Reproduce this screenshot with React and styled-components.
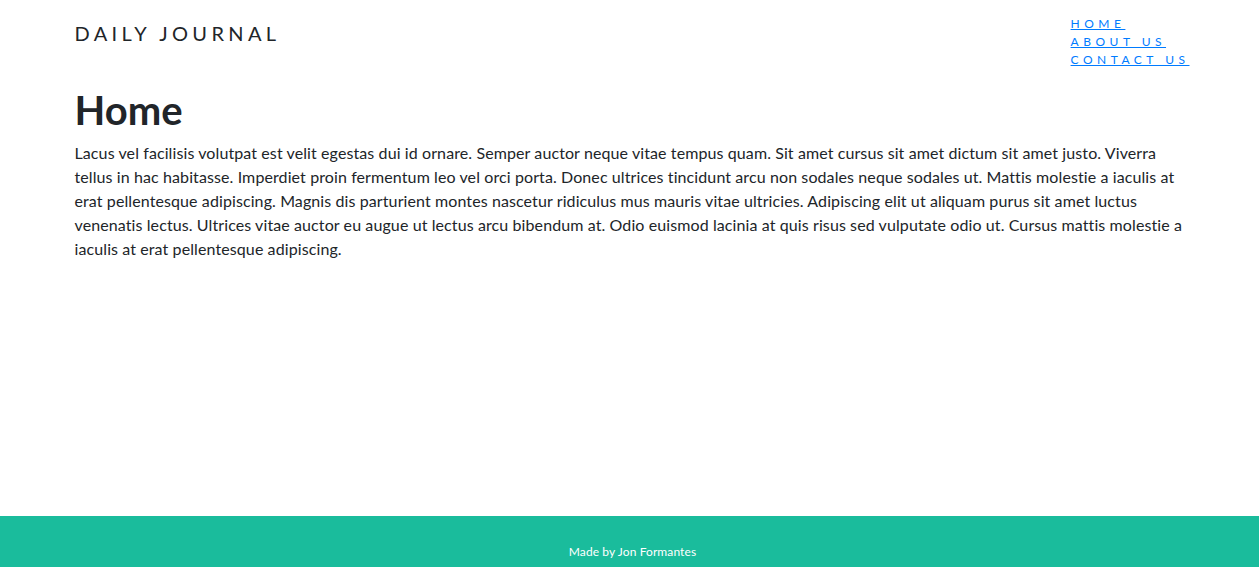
import React from "react";
import styled, { createGlobalStyle } from "styled-components";

const Global = createGlobalStyle`
  html, body { margin: 0; padding: 0; }
  body {
    font-family: Lato, "Liberation Sans", sans-serif;
    font-size: 16px;
    line-height: 1.5;
    color: #212529;
    background: #fff;
    font-variant-ligatures: none;
  }
  #root { min-height: 567px; display: flex; flex-direction: column; }
`;

const Page = styled.div`
  flex: 1;
  display: flex;
  flex-direction: column;
  min-height: 567px;
`;

const Container = styled.div`
  width: 1110px;
  margin: 0 auto;
  padding: 0 15px;
`;

const Header = styled.header`
  display: flex;
  justify-content: space-between;
  align-items: flex-start;
  padding-top: 15px;
`;

const Brand = styled.div`
  font-size: 20px;
  letter-spacing: 4.35px;
  color: #212529;
  margin-top: 6px;
  line-height: 24px;
`;

const NavList = styled.ul`
  list-style: none;
  margin: 0 -5px 0 0;
  padding: 0;
`;

const NavItem = styled.li`
  font-size: 12px;
  line-height: 18px;
`;

const NavLink = styled.a`
  color: #007bff;
  text-decoration: underline;
  letter-spacing: 4.5px;
`;

const Title = styled.h1`
  font-size: 40px;
  font-weight: 700;
  line-height: 1.2;
  margin: 17px 0 7px;
  color: #212529;
`;

const Body = styled.p`
  margin: 0;
  font-size: 16px;
  line-height: 24px;
  letter-spacing: 0.1px;
`;

const Main = styled.main`
  flex: 1;
`;

const Footer = styled.footer`
  background: #1abc9c;
  color: #fff;
  height: 51px;
  display: flex;
  justify-content: center;
  align-items: flex-end;
  padding: 0 0 6px 6px;
  box-sizing: border-box;
  font-size: 12px;
  letter-spacing: 0.1px;
`;

export default function App() {
  return (
    <>
      <Global />
      <Page>
        <Main>
          <Container>
            <Header>
              <Brand>DAILY JOURNAL</Brand>
              <NavList>
                <NavItem><NavLink href="#">HOME</NavLink></NavItem>
                <NavItem><NavLink href="#">ABOUT US</NavLink></NavItem>
                <NavItem><NavLink href="#">CONTACT US</NavLink></NavItem>
              </NavList>
            </Header>
            <Title>Home</Title>
            <Body>
              Lacus vel facilisis volutpat est velit egestas dui id ornare. Semper auctor neque vitae tempus quam. Sit amet cursus sit amet dictum sit amet justo. Viverra tellus in hac habitasse. Imperdiet proin fermentum leo vel orci porta. Donec ultrices tincidunt arcu non sodales neque sodales ut. Mattis molestie a iaculis at erat pellentesque adipiscing. Magnis dis parturient montes nascetur ridiculus mus mauris vitae ultricies. Adipiscing elit ut aliquam purus sit amet luctus venenatis lectus. Ultrices vitae auctor eu augue ut lectus arcu bibendum at. Odio euismod lacinia at quis risus sed vulputate odio ut. Cursus mattis molestie a iaculis at erat pellentesque adipiscing.
            </Body>
          </Container>
        </Main>
        <Footer>Made by Jon Formantes</Footer>
      </Page>
    </>
  );
}
